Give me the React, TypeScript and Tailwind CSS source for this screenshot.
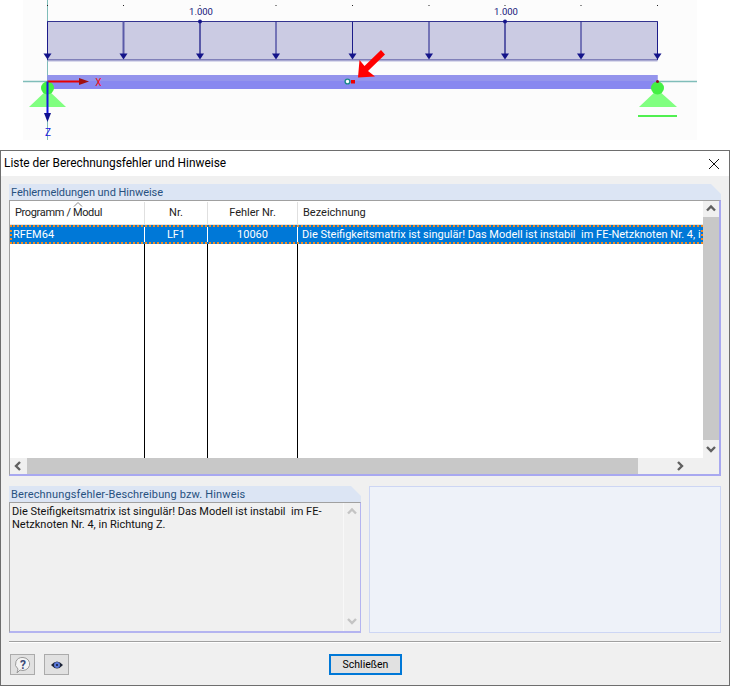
import React from "react";

const font = { fontFamily: 'Roboto, "Noto Sans", sans-serif' };

function Drawing() {
  const xs = [47.5, 123.5, 200, 276, 352.5, 429, 505, 581, 657.5];
  return (
    <svg width="730" height="150" viewBox="0 0 730 150" className="block">
      <rect x="0" y="0" width="730" height="150" fill="#ffffff" />
      <rect x="23" y="0" width="674" height="140" fill="#fcfcfc" />
      <line x1="47.5" y1="0" x2="47.5" y2="140" stroke="#7fbdb9" strokeWidth="1" />
      <line x1="23" y1="81.5" x2="47" y2="81.5" stroke="#7fbdb9" strokeWidth="1.5" />
      <line x1="657" y1="81.5" x2="697" y2="81.5" stroke="#7fbdb9" strokeWidth="1.5" />
      {xs.map((x) => (
        <rect key={x} x={x - 0.5} y="5" width="1" height="1" fill="#222" />
      ))}
      <rect x="47.5" y="21.5" width="610" height="38.5" fill="#cbcbe3" />
      <path d="M47.5 21.5H657.5V60H47.5Z" fill="none" stroke="#34348f" strokeWidth="1" />
      <rect x="47.5" y="60.5" width="610" height="1" fill="#b8b8dc" />
      {xs.map((x, i) => (
        <g key={`a${x}`}>
          <line x1={x} y1="21.5" x2={x} y2="55" stroke={i === 1 || i === 2 || i === 6 ? "#5a5aa8" : "#1c1c8a"} strokeWidth={i === 1 || i === 2 || i === 6 ? 2 : 1} />
          <path d={`M${x - 4} 53.5H${x + 4}L${x} 59.5Z`} fill="#14148a" />
        </g>
      ))}
      <circle cx="200" cy="21.5" r="2" fill="#14148a" />
      <circle cx="505" cy="21.5" r="2" fill="#14148a" />
      <text x="201" y="15" textAnchor="middle" fontSize="9.5" fill="#14147a" style={font}>1.000</text>
      <text x="506" y="15" textAnchor="middle" fontSize="9.5" fill="#14147a" style={font}>1.000</text>
      <rect x="47.5" y="75" width="610" height="14" fill="#8888f0" />
      <rect x="47.5" y="75" width="610" height="6" fill="#9494ec" />
      <path d="M29 107L47 90H48L66 107Z" fill="#80ff80" />
      <circle cx="47.5" cy="88" r="6.5" fill="#44f044" />
      <path d="M639 107L657 90H658L677 107Z" fill="#80ff80" />
      <circle cx="657.5" cy="88" r="6.5" fill="#44f044" />
      <rect x="638" y="115" width="39" height="2" fill="#50f050" />
      <circle cx="657.5" cy="81.5" r="1.5" fill="#8a1020" />
      <line x1="47.5" y1="81.5" x2="80" y2="81.5" stroke="#e80000" strokeWidth="2" />
      <path d="M79 78L89 81.5L79 85Z" fill="#a01010" />
      <text x="98.5" y="86" textAnchor="middle" fontSize="10" fill="#ee1111" style={font}>X</text>
      <line x1="47.5" y1="81.5" x2="47.5" y2="114" stroke="#1414e0" strokeWidth="2" />
      <path d="M44 113L47.5 122L51 113Z" fill="#101090" />
      <text x="48" y="136" textAnchor="middle" fontSize="10" fill="#1414e0" style={font}>Z</text>
      <circle cx="347.5" cy="81.5" r="2.4" fill="#ffffff" stroke="#1a8a8a" strokeWidth="1.4" />
      <rect x="351" y="80" width="4" height="3.5" fill="#ee0000" />
      <path d="M381 50L385 54.5L368 71L375 76.5L358 77.5L359.5 60L364.5 66Z" fill="#ff0000" />
    </svg>
  );
}

function SectionHeader({ children, wide }: { children: React.ReactNode; wide?: boolean }) {
  return (
    <div className={`h-[16px] bg-[#dce5f4] pl-[2px] text-[11px] leading-[18px] text-[#28517f] [clip-path:polygon(0_0,calc(100%-10px)_0,100%_10px,100%_100%,0_100%)] ${wide ? "tracking-[0.14px]" : "tracking-[-0.05px]"}`}>
      {children}
    </div>
  );
}

function Chevron({ dir, color = "#606060" }: { dir: "up" | "down" | "left" | "right"; color?: string }) {
  const d = {
    up: "M1 6.5L5 2.5L9 6.5",
    down: "M1 2L5 6L9 2",
    left: "M6 1L2 5L6 9",
    right: "M2 1L6 5L2 9",
  }[dir];
  return (
    <svg width="10" height="10" viewBox="0 0 10 10" fill="none" className="block">
      <path d={d} stroke={color} strokeWidth="2.4" />
    </svg>
  );
}

function GridTable() {
  const cols = "w-[135px]";
  return (
    <div className="flex min-h-0 flex-1 flex-col">
      <div className="flex h-[24px] shrink-0 border-b border-[#e4e4e4] pt-px text-[11px] text-[#222]">
        <div className={`${cols} relative flex items-center border-r border-[#e0e0e0] pl-[5px]`}>
          <span className="tracking-[-0.35px]">Programm / Modul</span>
          <svg width="10" height="5" viewBox="0 0 10 5" className="absolute left-[63px] top-0">
            <path d="M1 4.5L5 .5L9 4.5" fill="none" stroke="#888" />
          </svg>
        </div>
        <div className="flex w-[63px] items-center justify-center border-r border-[#e0e0e0]">Nr.</div>
        <div className="flex w-[90px] items-center justify-center border-r border-[#e0e0e0]">Fehler Nr.</div>
        <div className="flex min-w-0 flex-1 items-center pl-[5px]">Bezeichnung</div>
      </div>
      <div className="flex h-[19px] shrink-0 border-2 border-dotted border-[#f08a24] bg-[#0078d7] text-[11px] leading-[15px] text-white">
        <div className={`${cols} -ml-[2px] border-r border-white pl-[3px]`}>RFEM64</div>
        <div className="w-[63px] border-r border-white text-center">LF1</div>
        <div className="w-[90px] border-r border-white text-center">10060</div>
        <div className="min-w-0 flex-1 overflow-hidden whitespace-nowrap pl-[4px]">
          Die Steifigkeitsmatrix ist singulär! Das Modell ist instabil&nbsp; im FE-Netzknoten Nr. 4, in Richtung Z.
        </div>
      </div>
      <div className="flex min-h-0 flex-1">
        <div className={`${cols} border-r border-black`} />
        <div className="w-[63px] border-r border-black" />
        <div className="w-[90px] border-r border-black" />
      </div>
    </div>
  );
}

export default function App() {
  return (
    <div className="relative h-[686px] w-[730px] overflow-hidden bg-white" style={font}>
      <Drawing />
      <div className="flex h-[536px] w-[730px] flex-col border border-[#6e6e6e] bg-[#f0f0f0] text-black">
        <div className="flex h-[25px] shrink-0 items-center justify-between bg-white pl-[3px] pr-[9px]">
          <span className="pt-px text-[11.9px]">Liste der Berechnungsfehler und Hinweise</span>
          <svg width="12" height="12" viewBox="0 0 12 12">
            <path d="M1 1L11 11M11 1L1 11" stroke="#111" strokeWidth="1" fill="none" />
          </svg>
        </div>

        <div className="flex min-h-0 flex-1 flex-col px-[8px] pt-[8px]">
          <SectionHeader>Fehlermeldungen und Hinweise</SectionHeader>
          <div className="flex h-[276px] shrink-0 flex-col border-b-2 border-l border-r-2 border-t border-b-[#a8a8f0] border-l-[#a0a0a0] border-r-[#a8a8f0] border-t-[#a0a0a0]">
            <div className="flex min-h-0 flex-1">
              <div className="min-w-0 flex-1 bg-white">
                <div className="flex h-[257px] flex-col"><GridTable /></div>
              </div>
              <div className="flex w-[16px] shrink-0 flex-col bg-[#f0f0f0]">
                <div className="flex h-[16px] items-center justify-center"><Chevron dir="up" /></div>
                <div className="h-[223px] bg-[#c8c8c8]" />
                <div className="flex-1" />
                <div className="flex h-[16px] items-center justify-center"><Chevron dir="down" /></div>
              </div>
            </div>
            <div className="flex h-[16px] shrink-0 items-center bg-[#f0f0f0]">
              <div className="flex h-full w-[17px] items-center justify-center"><Chevron dir="left" /></div>
              <div className="h-full w-[611px] bg-[#c8c8c8]" />
              <div className="flex-1" />
              <div className="flex h-full w-[46px] items-center justify-center pr-[30px]"><Chevron dir="right" /></div>
            </div>
          </div>

          <div className="mt-[10px] flex h-[147px] shrink-0 gap-[8px]">
            <div className="flex w-[352px] flex-col">
              <SectionHeader wide>Berechnungsfehler-Beschreibung bzw. Hinweis</SectionHeader>
              <div className="flex min-h-0 flex-1 border-b-2 border-l border-r border-t border-b-[#b4b4f0] border-l-[#a0a0a0] border-r-[#b4b4f0] border-t-[#a0a0a0] bg-[#f0f0f0]">
                <div className="min-w-0 flex-1 px-[2px] pt-[2px] text-[11px] leading-[13px] text-[#111]">
                  Die Steifigkeitsmatrix ist singulär! Das Modell ist instabil&nbsp; im FE-Netzknoten Nr. 4, in Richtung Z.
                </div>
                <div className="flex w-[17px] flex-col justify-between border-l border-[#f8f8f8] py-[4px]">
                  <div className="flex justify-center"><Chevron dir="up" color="#c4c4c4" /></div>
                  <div className="flex justify-center"><Chevron dir="down" color="#c4c4c4" /></div>
                </div>
              </div>
            </div>
            <div className="min-w-0 flex-1 border border-[#cdd6f4] bg-[#eef2f9]" />
          </div>

          <div className="mt-[8px] h-[2px] shrink-0 border-t border-[#a0a0a0] bg-white" />

          <div className="ml-px mt-[11px] flex h-[21px] shrink-0 items-stretch">
            <button className="flex w-[25px] items-center justify-center border border-[#ababab] bg-[#e1e1e1]">
              <svg width="18" height="18" viewBox="0 0 18 18">
                <path d="M9 1.5a7 6.5 0 1 1-3 12.5L3 17l1-4A7 6.5 0 0 1 9 1.5Z" fill="#f4f4f4" stroke="#9a9a9a" />
                <text x="9" y="12.5" textAnchor="middle" fontSize="12" fontWeight="700" fill="#3c4a78" style={font}>?</text>
              </svg>
            </button>
            <button className="ml-[9px] flex w-[25px] items-center justify-center border border-[#ababab] bg-[#e1e1e1]">
              <svg width="14" height="10" viewBox="0 0 14 10">
                <path d="M1 5Q7-2 13 5Q7 12 1 5Z" fill="#1c2438" />
                <circle cx="7" cy="5" r="3" fill="#5a78d8" />
                <circle cx="7" cy="5" r="1" fill="#101830" />
              </svg>
            </button>
            <button className="ml-[260px] flex w-[73px] items-center justify-center border-2 border-[#0078d7] bg-[#e1e1e1] text-[10.5px] text-black">
              Schließen
            </button>
          </div>
        </div>
      </div>
    </div>
  );
}
